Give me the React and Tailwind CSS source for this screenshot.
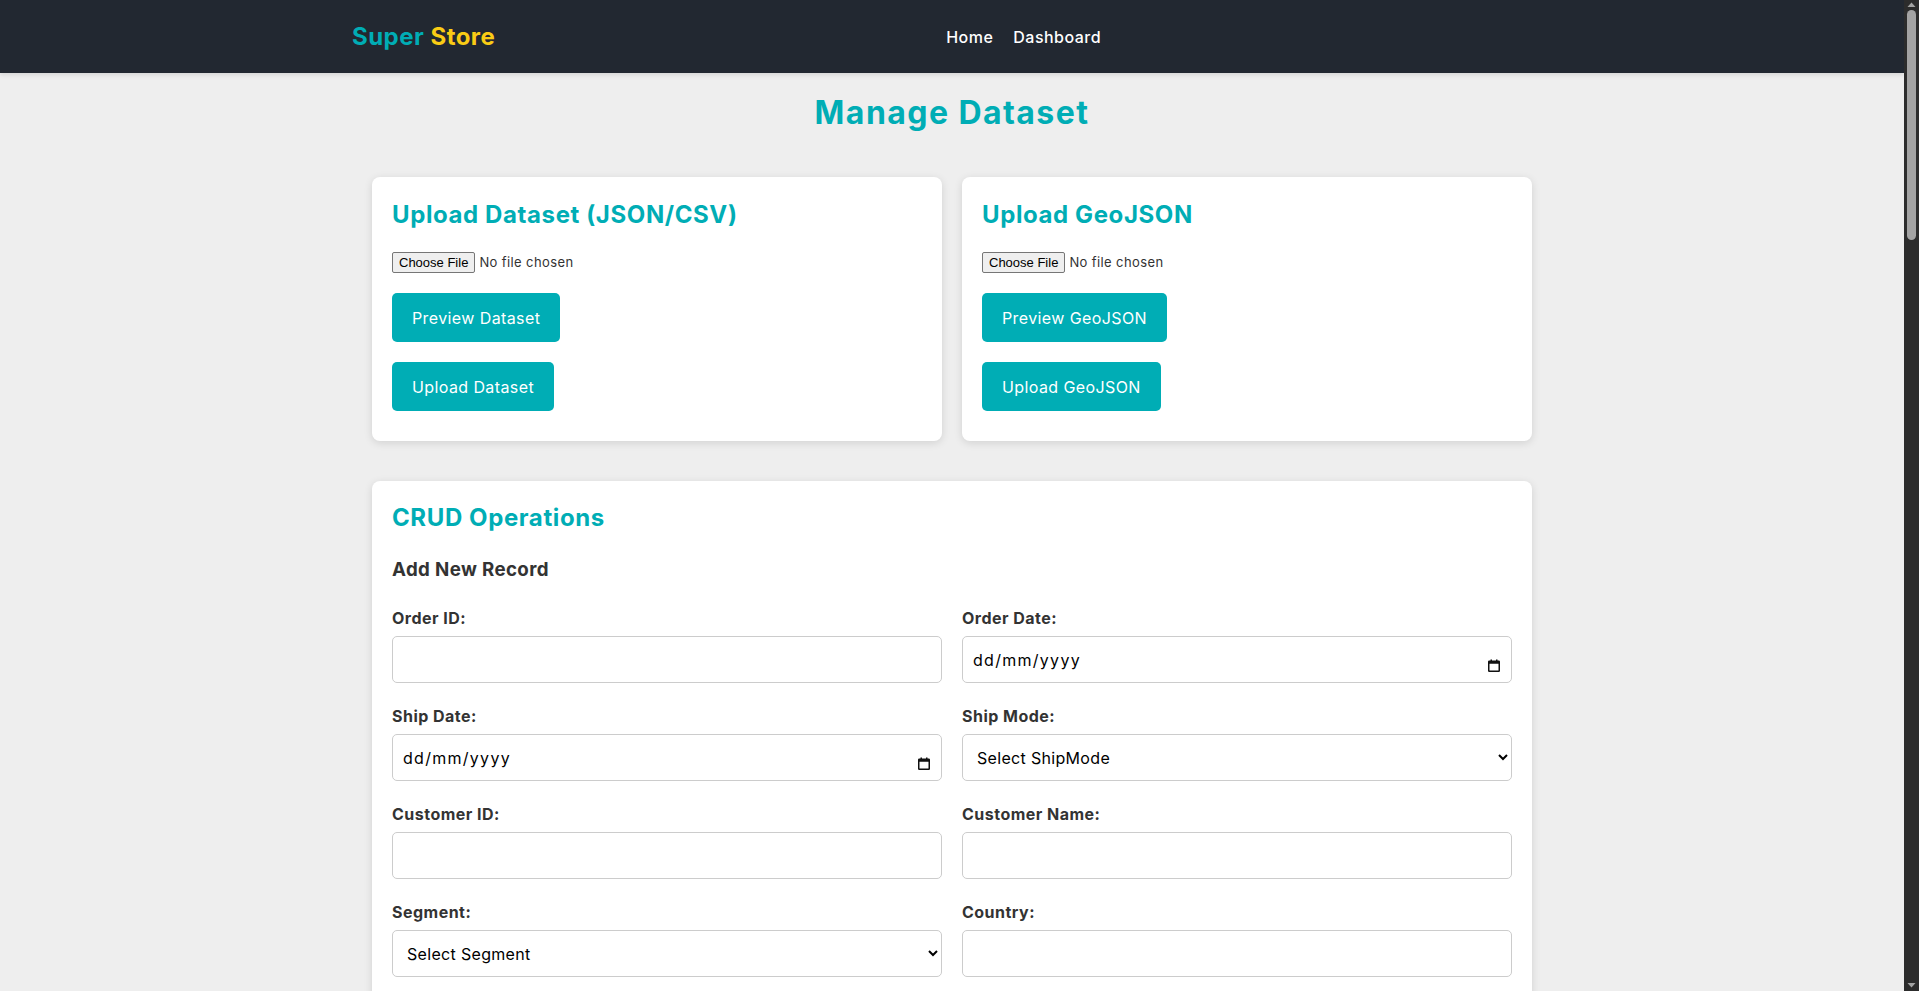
import { useState } from "react";

const fields = [
  { name: "orderId", label: "Order ID:", type: "text" },
  { name: "orderDate", label: "Order Date:", type: "date" },
  { name: "shipDate", label: "Ship Date:", type: "date" },
  { name: "shipMode", label: "Ship Mode:", type: "select", placeholder: "Select ShipMode", options: ["First Class", "Second Class", "Standard Class", "Same Day"] },
  { name: "customerId", label: "Customer ID:", type: "text" },
  { name: "customerName", label: "Customer Name:", type: "text" },
  { name: "segment", label: "Segment:", type: "select", placeholder: "Select Segment", options: ["Consumer", "Corporate", "Home Office"] },
  { name: "country", label: "Country:", type: "text" },
  { name: "city", label: "City:", type: "text" },
  { name: "state", label: "State:", type: "text" },
  { name: "postalCode", label: "Postal Code:", type: "text" },
  { name: "region", label: "Region:", type: "select", placeholder: "Select Region", options: ["Central", "East", "South", "West"] },
  { name: "productId", label: "Product ID:", type: "text" },
  { name: "category", label: "Category:", type: "select", placeholder: "Select Category", options: ["Furniture", "Office Supplies", "Technology"] },
  { name: "subCategory", label: "Sub-Category:", type: "text" },
  { name: "productName", label: "Product Name:", type: "text" },
  { name: "sales", label: "Sales:", type: "number" },
  { name: "quantity", label: "Quantity:", type: "number" },
  { name: "discount", label: "Discount:", type: "number" },
  { name: "profit", label: "Profit:", type: "number" },
];

const inputClass =
  "mt-[6px] block w-full h-[47px] px-[10px] border border-[#ccc] rounded-[5px] bg-white text-base text-black tracking-[0.02em] outline-none";

const btnClass = "block h-[49px] px-5 bg-[#00adb5] text-white text-base tracking-[0.025em] rounded-[5px]";

const CalendarIcon = () => (
  <svg width="12" height="13" viewBox="0 0 12 13" className="pointer-events-none absolute right-[12px] top-[23px]">
    <rect x="0.75" y="2.25" width="10.5" height="10" fill="none" stroke="#111" strokeWidth="1.5" rx="0.5" />
    <rect x="0.75" y="2.25" width="10.5" height="2.5" fill="#111" />
    <rect x="2.5" y="0.5" width="1.5" height="2.5" fill="#111" />
    <rect x="8" y="0.5" width="1.5" height="2.5" fill="#111" />
  </svg>
);

const UploadCard = ({ title, previewLabel, uploadLabel }) => (
  <div className="bg-white rounded-lg shadow-[0_2px_8px_rgba(0,0,0,0.12)] px-5 pt-5 pb-[30px]">
    <h2 className="text-2xl leading-9 font-bold tracking-[0.025em] text-[#00adb5]">{title}</h2>
    <input
      type="file"
      className="mt-[19px] block h-[21px] text-[13px] tracking-[0.03em] text-[#333] file:font-['Liberation_Sans',sans-serif] file:tracking-normal file:mr-[4px] file:h-[21px] file:px-[6px] file:border file:border-[#767676] file:rounded-[2px] file:bg-[#efefef] file:text-black file:text-[13px]"
    />
    <button className={`mt-5 ${btnClass}`}>{previewLabel}</button>
    <button className={`mt-5 ${btnClass}`}>{uploadLabel}</button>
  </div>
);

// dark scrollbar strip as it shows in the screenshot
const ScrollStrip = () => (
  <div className="w-[15px] shrink-0 bg-[#2c2c2c] flex flex-col items-center">
    <svg width="9" height="6" viewBox="0 0 9 6" className="mt-[2px]">
      <path d="M4.5 0.5 L8.5 5 L0.5 5 Z" fill="#a3a3a3" />
    </svg>
    <div className="mt-[2px] w-[9px] h-[230px] rounded-full bg-[#a3a3a3]" />
    <div className="flex-1" />
    <svg width="9" height="6" viewBox="0 0 9 6" className="mb-[3px]">
      <path d="M0.5 1 L8.5 1 L4.5 5.5 Z" fill="#a3a3a3" />
    </svg>
  </div>
);

export default function App() {
  const [form, setForm] = useState({});

  const onChange = (e) => setForm({ ...form, [e.target.name]: e.target.value });

  return (
    <div className="flex h-screen">
      <div className="flex-1 min-w-0 overflow-y-auto [scrollbar-width:none]">
        <div className="min-h-full bg-[#eeeeee] font-[Inter,sans-serif] text-[#333]">
          <nav className="bg-[#222831] h-[73px] shadow-[0_2px_4px_rgba(0,0,0,0.1)]">
            <div className="max-w-[1200px] mx-auto h-full flex items-center justify-between">
              <div className="text-2xl font-bold tracking-[0.02em]">
                <span className="text-[#00adb5]">Super</span> <span className="text-[#facc15]">Store</span>
              </div>
              <div className="flex items-center gap-5 text-white text-base font-medium tracking-[0.03em]">
                <a href="#">Home</a>
                <a href="#">Dashboard</a>
              </div>
              <div></div>
            </div>
          </nav>

          <main className="max-w-[1200px] mx-auto px-5 pb-16">
            <h1 className="mt-4 text-[32px] leading-[48px] font-bold tracking-[0.045em] text-center text-[#00adb5]">
              Manage Dataset
            </h1>

            <div className="mt-10 grid grid-cols-2 gap-5">
              <UploadCard title="Upload Dataset (JSON/CSV)" previewLabel="Preview Dataset" uploadLabel="Upload Dataset" />
              <UploadCard title="Upload GeoJSON" previewLabel="Preview GeoJSON" uploadLabel="Upload GeoJSON" />
            </div>

            <div className="mt-10 bg-white rounded-lg shadow-[0_2px_8px_rgba(0,0,0,0.12)] px-5 pt-[19px] pb-6">
              <h2 className="text-2xl leading-9 font-bold tracking-[0.025em] text-[#00adb5]">CRUD Operations</h2>
              <h3 className="mt-5 text-[18.72px] leading-7 font-bold tracking-[0.02em]">Add New Record</h3>
              <form className="mt-[22px] grid grid-cols-2 gap-x-5 gap-y-[21px]">
                {fields.map((f) => (
                  <div key={f.name}>
                    <label className="block text-base leading-6 font-bold tracking-[0.03em]">{f.label}</label>
                    {f.type === "select" ? (
                      <select name={f.name} value={form[f.name] || ""} onChange={onChange} className={inputClass}>
                        <option value="">{f.placeholder}</option>
                        {f.options.map((o) => (
                          <option key={o} value={o}>
                            {o}
                          </option>
                        ))}
                      </select>
                    ) : f.type === "date" ? (
                      <div className="relative">
                        <input
                          type="text"
                          name={f.name}
                          placeholder="dd/mm/yyyy"
                          value={form[f.name] || ""}
                          onChange={onChange}
                          className={`${inputClass} placeholder:text-black placeholder:tracking-[0.08em]`}
                        />
                        <CalendarIcon />
                      </div>
                    ) : (
                      <input type={f.type} name={f.name} value={form[f.name] || ""} onChange={onChange} className={inputClass} />
                    )}
                  </div>
                ))}
              </form>
              <button className={`mt-5 ${btnClass}`}>Add Record</button>
            </div>
          </main>
        </div>
      </div>
      <ScrollStrip />
    </div>
  );
}
